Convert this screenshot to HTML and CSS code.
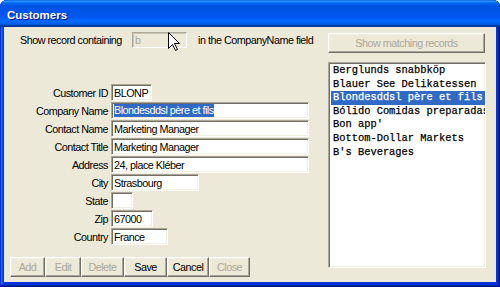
FILE: index.html
```html
<!DOCTYPE html>
<html>
<head>
<meta charset="utf-8">
<link rel="stylesheet" href="styles.css">
</head>
<body>
<div class="window">
  <div class="titlebar"><span class="title">Customers</span></div>
  <div class="frame">
    <div class="left">
      <div class="filter">
        <span class="filter-label">Show record containing</span>
        <div class="filter-box">
          <span class="filter-text">b</span>
          <svg class="cursor" width="13" height="20" viewBox="0 0 13 20"><path d="M0.5 0.5 L0.5 16.5 L4.5 12.5 L7.5 18.5 L9.5 17.5 L6.5 11.5 L11.5 11.5 Z" fill="#fff" stroke="#000" stroke-width="1" stroke-linejoin="miter"/></svg>
        </div>
        <span class="filter-after">in the CompanyName field</span>
      </div>
      <div class="form">
        <label>Customer ID</label><div class="field w-id">BLONP</div>
        <label>Company Name</label><div class="field w-long"><span class="sel">Blondesddsl père et fils</span></div>
        <label>Contact Name</label><div class="field w-long">Marketing Manager</div>
        <label>Contact Title</label><div class="field w-long">Marketing Manager</div>
        <label>Address</label><div class="field w-long">24, place Kléber</div>
        <label>City</label><div class="field w-city">Strasbourg</div>
        <label>State</label><div class="field w-state"></div>
        <label>Zip</label><div class="field w-zip">67000</div>
        <label>Country</label><div class="field w-country">France</div>
      </div>
      <div class="actions">
        <button class="btn w-add" disabled>Add</button>
        <button class="btn w-edit" disabled>Edit</button>
        <button class="btn w-delete" disabled>Delete</button>
        <button class="btn w-save">Save</button>
        <button class="btn w-cancel">Cancel</button>
        <button class="btn w-close" disabled>Close</button>
      </div>
    </div>
    <div class="right">
      <button class="btn show" disabled>Show matching records</button>
      <ul class="list">
        <li>Berglunds snabbköp</li>
        <li>Blauer See Delikatessen</li>
        <li class="selected">Blondesddsl père et fils</li>
        <li>Bólido Comidas preparadas</li>
        <li>Bon app'</li>
        <li>Bottom-Dollar Markets</li>
        <li>B's Beverages</li>
      </ul>
    </div>
  </div>
</div>
</body>
</html>
```

FILE: styles.css
```css
html, body {
  margin: 0;
  padding: 0;
  background: #ffffff;
}
body {
  width: 500px;
  height: 287px;
  overflow: hidden;
  font-family: "Liberation Sans", Arial, sans-serif;
  font-size: 10.8px;
  letter-spacing: -0.5px;
  color: #000;
}
.window {
  width: 500px;
  height: 287px;
  display: flex;
  flex-direction: column;
  background: #0831d9;
  border-radius: 7px 7px 0 0;
  overflow: hidden;
  box-shadow: inset -1px -1px #00138c, inset 1px 1px #0831d9, inset -2px -2px #001ea0, inset 2px 2px #166aee, inset -3px -3px #003bda, inset 3px 3px #0855dd;
}
.titlebar {
  flex: none;
  height: 27px;
  box-sizing: border-box;
  display: flex;
  align-items: center;
  padding: 2px 0 0 7px;
  background: linear-gradient(180deg, #0058ee 0%, #3593ff 4%, #288eff 6%, #127dff 8%, #036ffc 10%, #0262ee 14%, #0057e5 20%, #0054e3 24%, #0055eb 56%, #005bf5 66%, #026afe 76%, #0062ef 86%, #0052d6 92%, #0040ab 94%, #003092 100%);
}
.title {
  color: #fff;
  font-weight: bold;
  font-size: 11.5px;
  letter-spacing: 0;
  text-shadow: 1px 1px #0f1089;
}
.frame {
  flex: 1;
  margin: 0 4px 5px 4px;
  background: #ece9d8;
  display: flex;
}
.left {
  width: 324px;
  display: flex;
  flex-direction: column;
  padding-top: 5px;
}
.filter {
  display: flex;
  align-items: center;
  height: 16px;
  padding-left: 16px;
}
.filter-label {
  width: 112px;
  white-space: nowrap;
}
.filter-box {
  position: relative;
  width: 55px;
  height: 16px;
  box-sizing: border-box;
  border: 1px solid;
  border-color: #aca899 #fff #fff #aca899;
  box-shadow: inset 1px 1px #c9c6b6;
  background: #ece9d8;
  display: flex;
  align-items: center;
  padding-left: 2px;
}
.filter-text {
  color: #aca899;
}
.cursor {
  position: absolute;
  left: 35px;
  top: -1px;
}
.filter-after {
  margin-left: 11px;
  white-space: nowrap;
}
.form {
  margin-top: 36px;
  display: grid;
  grid-template-columns: 104px auto;
  column-gap: 3px;
  row-gap: 1px;
  grid-auto-rows: 17px;
  justify-items: start;
}
.form label {
  justify-self: end;
  align-self: center;
  white-space: nowrap;
}
.field {
  height: 17px;
  box-sizing: border-box;
  border: 1px solid;
  border-color: #aca899 #fff #fff #aca899;
  box-shadow: inset 1px 1px #716f64, inset -1px -1px #f1efe2;
  background: #fff;
  padding-left: 2px;
  display: flex;
  align-items: center;
  white-space: nowrap;
  overflow: hidden;
}
.sel {
  background: #316ac5;
  color: #fff;
  line-height: 13px;
}
.w-id { width: 41px; }
.w-long { width: 198px; }
.w-city { width: 88px; }
.w-state { width: 22px; }
.w-zip { width: 42px; }
.w-country { width: 57px; }
.btn {
  margin: 0;
  padding: 0;
  font: inherit;
  letter-spacing: inherit;
  color: #000;
  background: #ece9d8;
  box-sizing: border-box;
  border: 1px solid;
  border-color: #fff #716f64 #716f64 #fff;
  box-shadow: inset -1px -1px #aca899, inset 1px 1px #f1efe2;
  height: 20px;
}
.btn:disabled {
  color: #aca899;
}
.actions {
  margin-top: 12px;
  padding-left: 6px;
  display: flex;
}
.w-add { width: 35px; }
.w-edit { width: 36px; }
.w-delete { width: 43px; }
.w-save { width: 43px; }
.w-cancel { width: 42px; }
.w-close { width: 41px; }
.right {
  width: 158px;
  padding-top: 6px;
  display: flex;
  flex-direction: column;
}
.show {
  width: 157px;
}
.list {
  margin: 9px 0 0 0;
  padding: 1px 0 0 1px;
  list-style: none;
  height: 206px;
  box-sizing: border-box;
  border: 1px solid;
  border-color: #aca899 #fff #fff #aca899;
  box-shadow: inset 1px 1px #716f64, inset -1px -1px #f1efe2;
  background: #fff;
  overflow: hidden;
}
.list li {
  font-family: "Liberation Mono", "Courier New", monospace;
  font-size: 10.4px;
  letter-spacing: 0;
  line-height: 13.6px;
  white-space: nowrap;
  padding-left: 2px;
  margin-left: 1px;
  -webkit-text-stroke: 0.25px currentColor;
}
.list li.selected {
  background: #316ac5;
  color: #fff;
}
```
